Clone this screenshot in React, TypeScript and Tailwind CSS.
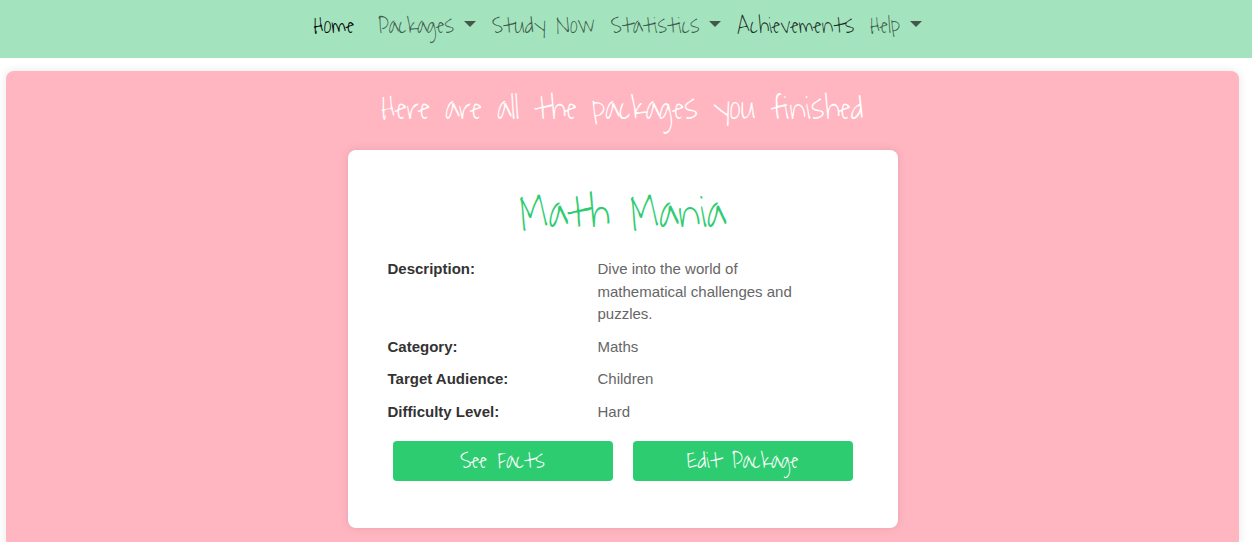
import React from "react";

const script = "font-['Ink_Free','Waiting_for_the_Sunrise',cursive] font-normal";

type NavItem = { label: string; menu?: boolean; tone: string };

const navItems: NavItem[] = [
  { label: "Home", tone: "text-black mr-2" },
  { label: "Packages", menu: true, tone: "text-black/60" },
  { label: "Study Now", tone: "text-black/60" },
  { label: "Statistics", menu: true, tone: "text-black/60" },
  { label: "Achievements", tone: "text-black/80" },
  { label: "Help", menu: true, tone: "text-black/60" },
];

const details = [
  { label: "Description:", value: "Dive into the world of mathematical challenges and puzzles." },
  { label: "Category:", value: "Maths" },
  { label: "Target Audience:", value: "Children" },
  { label: "Difficulty Level:", value: "Hard" },
];

function Caret() {
  return (
    <svg viewBox="0 0 12 6" className="mb-1 ml-[10px] h-[6px] w-[12px] fill-[#41594b]" aria-hidden="true">
      <path d="M0 0H12L6 6Z" />
    </svg>
  );
}

function NavBar() {
  return (
    <nav className={`${script} flex min-h-[58px] justify-center bg-[#a3e4be] pt-3 pr-4 text-2xl leading-7`}>
      <ul className="flex">
        {navItems.map((item) => (
          <li key={item.label} className={`px-2 ${item.tone}`}>
            {item.menu ? (
              <button type="button" className="flex items-center whitespace-nowrap">
                {item.label}
                <Caret />
              </button>
            ) : (
              <a href="#" className="block whitespace-nowrap">
                {item.label}
              </a>
            )}
          </li>
        ))}
      </ul>
    </nav>
  );
}

function PackageCard() {
  return (
    <article className="mx-auto w-full max-w-[550px] rounded-lg bg-white px-10 pt-[38px] pb-[47px] shadow-[0_0_10px_rgba(0,0,0,0.1)]">
      <h2 className={`${script} text-center text-[46px] leading-[52px] text-[#2ecc71]`}>Math Mania</h2>
      <dl className="mt-[18px] flex flex-col gap-[10px] font-['Liberation_Sans',Arial,sans-serif] text-[15px] leading-normal">
        {details.map((detail) => (
          <div key={detail.label} className="grid grid-cols-[210px_210px]">
            <dt className="font-bold text-[#333]">{detail.label}</dt>
            <dd className="text-[#666]">{detail.value}</dd>
          </div>
        ))}
      </dl>
      <div className={`${script} mt-[18px] grid grid-cols-2 gap-5 px-[5px] text-2xl text-white`}>
        <button type="button" className="h-10 rounded bg-[#2ecc71]">See Facts</button>
        <button type="button" className="h-10 rounded bg-[#2ecc71]">Edit Package</button>
      </div>
    </article>
  );
}

export default function App() {
  return (
    <div className="min-h-screen overflow-x-hidden bg-white">
      <NavBar />
      <main className="mt-[13px] mr-[13px] ml-[6px] rounded-lg bg-[#ffb6c1] px-5 pt-[18px] pb-5 shadow-[0_0_10px_rgba(0,0,0,0.1)]">
        <h1 className={`${script} mb-[21px] text-center text-[34px] leading-10 text-white`}>
          Here are all the packages you finished
        </h1>
        <PackageCard />
      </main>
    </div>
  );
}
